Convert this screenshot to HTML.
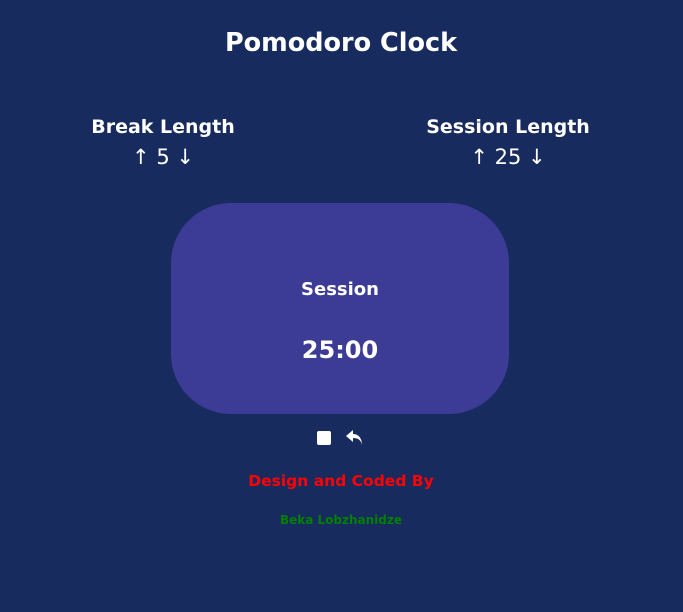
<!DOCTYPE html>
<html><head><style>
body{margin:0;width:683px;height:612px;background:#182b5f;color:#fff;font-family:"DejaVu Sans","Liberation Sans",sans-serif;position:relative;overflow:hidden}
.a{position:absolute;white-space:nowrap;transform:translateX(-50%)}
h1{margin:0;font-size:26px;font-weight:bold}
.lbl{font-size:19px;font-weight:bold}
.num{font-size:21px}
.box{position:absolute;left:171px;top:203px;width:338px;height:211px;background:#3c3b96;border-radius:60px}
</style></head><body>
<div class="a" style="left:341px;top:28px"><h1 style="font-size:25.5px">Pomodoro Clock</h1></div>
<div class="a lbl" style="left:163px;top:116px">Break Length</div>
<div class="a num" style="left:163px;top:145px">↑ 5 ↓</div>
<div class="a lbl" style="left:508px;top:116px">Session Length</div>
<div class="a num" style="left:508px;top:145px">↑ 25 ↓</div>
<div class="box"></div>
<div class="a" style="left:340px;top:279px;font-size:18px;font-weight:bold">Session</div>
<div class="a" style="left:340px;top:336px;font-size:24px;font-weight:bold">25:00</div>
<div style="position:absolute;left:317px;top:431px;width:14px;height:14px;background:#fff;border-radius:2px"></div>
<svg style="position:absolute;left:345px;top:429px" width="20" height="18" viewBox="0 0 20 18"><path d="M8 1 L1 7 L8 13 V9 C13 9 16 11 17 16 C17 10 14 5 8 5 Z" fill="#fff"/></svg>
<div class="a" style="left:341px;top:472px;color:#ff0000;font-size:15.5px;font-weight:bold">Design and Coded By</div>
<div class="a" style="left:341px;top:513px;color:#008000;font-size:12px;font-weight:bold">Beka Lobzhanidze</div>
</body></html>
